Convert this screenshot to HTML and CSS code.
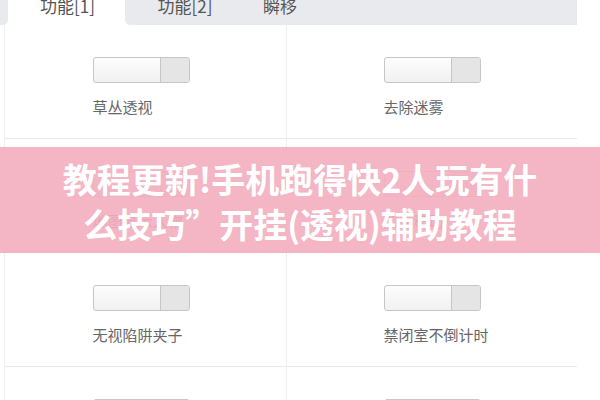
FILE: index.html
```html
<!DOCTYPE html>
<html lang="zh-CN">
<head>
    <meta charset="UTF-8">
    <meta name="viewport" content="width=device-width, initial-scale=1.0">
    <title>功能设置</title>
    <link rel="stylesheet" href="styles.css">
</head>
<body>
    <div class="tabs">
        <div class="tab-edge"></div>
        <div class="tab active">功能[1]</div>
        <div class="tab-rest">
            <div class="tab tab-2">功能[2]</div>
            <div class="tab tab-3">瞬移</div>
        </div>
    </div>

    <div class="panel">
        <div class="cell">
            <div class="item">
                <div class="switch"><span class="knob"></span></div>
                <div class="label">草丛透视</div>
            </div>
        </div>
        <div class="cell">
            <div class="item">
                <div class="switch"><span class="knob"></span></div>
                <div class="label">去除迷雾</div>
            </div>
        </div>
        <div class="cell">
            <div class="item">
                <div class="switch"><span class="knob"></span></div>
                <div class="label">地图显示人物</div>
            </div>
        </div>
        <div class="cell">
            <div class="item">
                <div class="switch"><span class="knob"></span></div>
                <div class="label">加速移动</div>
            </div>
        </div>
        <div class="cell">
            <div class="item">
                <div class="switch"><span class="knob"></span></div>
                <div class="label">无视陷阱夹子</div>
            </div>
        </div>
        <div class="cell">
            <div class="item">
                <div class="switch"><span class="knob"></span></div>
                <div class="label">禁闭室不倒计时</div>
            </div>
        </div>
        <div class="cell">
            <div class="item">
                <div class="switch"><span class="knob"></span></div>
                <div class="label">自动修机</div>
            </div>
        </div>
        <div class="cell">
            <div class="item">
                <div class="switch"><span class="knob"></span></div>
                <div class="label">无限体力</div>
            </div>
        </div>
    </div>

    <!-- article title banner over the settings -->
    <div class="banner">
        <p>教程更新!手机跑得快2人玩有什</p>
        <p>么技巧”开挂(透视)辅助教程</p>
    </div>
</body>
</html>
```

FILE: styles.css
```css
html, body {
    margin: 0;
    padding: 0;
}
body {
    width: 600px;
    height: 400px;
    overflow: hidden;
    position: relative;
    background: #fff;
    font-family: "Microsoft YaHei", "Noto Sans CJK SC", sans-serif;
    color: #555;
}

/* tab strip */
.tabs {
    display: flex;
    height: 25px;
}
.tab-edge {
    width: 8px;
    background: #e9eaed;
    border-bottom-right-radius: 5px;
}
.tab {
    font-size: 17px;
    line-height: 12px;
    text-align: center;
    color: #555;
}
.tab.active {
    width: 115px;
    margin-left: 2px;
    background: #fff;
}
.tab-rest {
    display: flex;
    width: 452px;
    background: #e9eaed;
    border-bottom-left-radius: 5px;
}
.tab-2 {
    width: 120px;
}
.tab-3 {
    width: 70px;
}

/* two column grid of switches */
.panel {
    display: grid;
    grid-template-columns: 282px 290px;
    grid-auto-rows: 114px;
    margin-left: 4px;
    border-left: 1px solid #f0f0f0;
}
.cell {
    display: flex;
    justify-content: center;
    padding-top: 32px;
    border-bottom: 1px solid #e9e9e9;
    box-sizing: border-box;
}
.cell:nth-child(odd) {
    padding-right: 9px;
    border-right: 1px solid #efefef;
}
.item {
    width: 97px;
}
.switch {
    display: flex;
    justify-content: flex-end;
    width: 97px;
    height: 26px;
    box-sizing: border-box;
    border: 1px solid #c6c6c6;
    border-radius: 3px;
    background: linear-gradient(#fdfdfd, #f1f1f1);
}
.knob {
    width: 28px;
    background: #e5e5e5;
    border-left: 1px solid #c6c6c6;
    border-radius: 0 2px 2px 0;
}
.label {
    margin-top: 14px;
    font-size: 15px;
    line-height: 20px;
    white-space: nowrap;
    color: #666;
}

/* pink title overlay */
.banner {
    position: absolute;
    left: 0;
    right: 0;
    top: 147px;
    height: 106px;
    box-sizing: border-box;
    padding: 9px 0 7px;
    background: rgba(243, 174, 190, 0.9);
    text-align: center;
}
.banner p {
    margin: 0;
    font-family: "Noto Sans CJK SC", sans-serif;
    font-size: 34px;
    font-weight: bold;
    line-height: 45px;
    color: #fff;
}
```
